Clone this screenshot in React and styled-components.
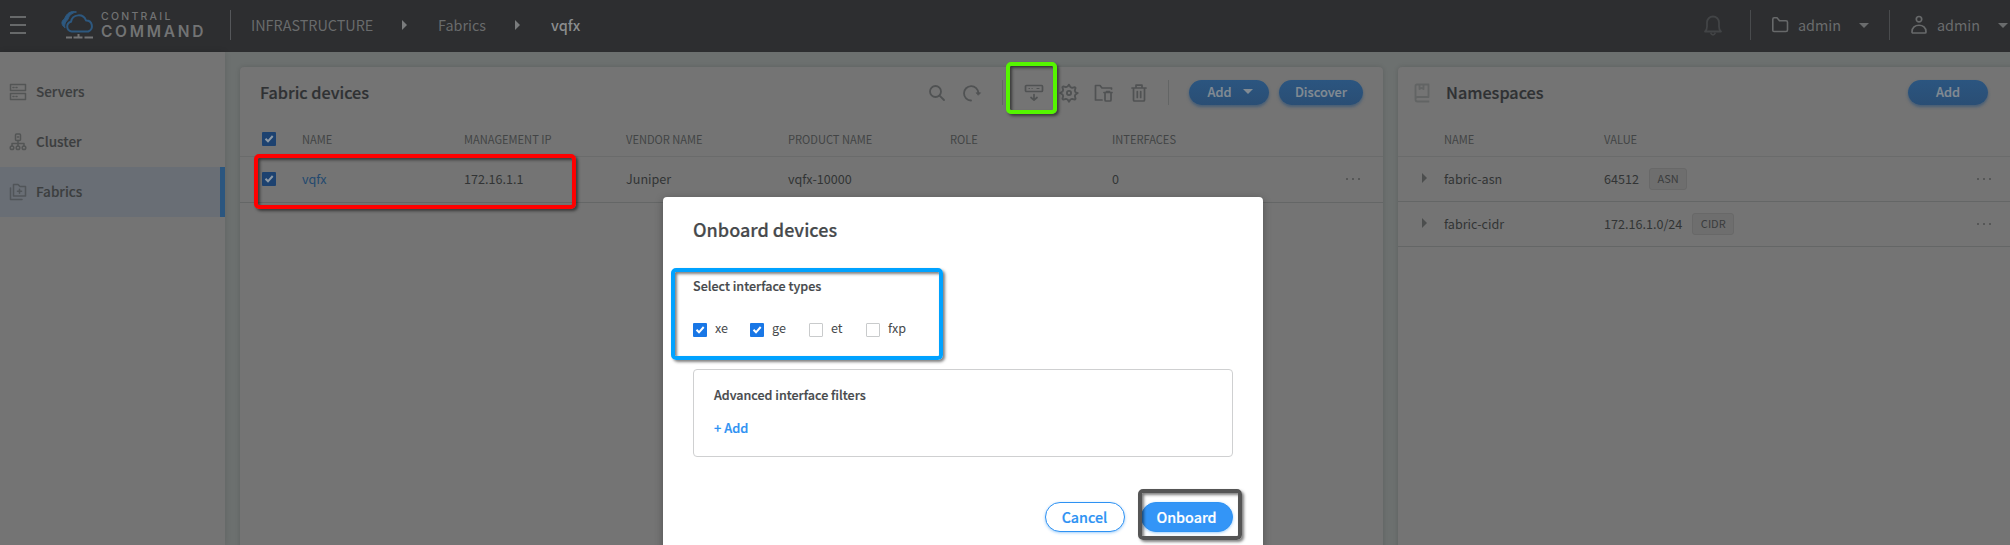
import React from "react";
import styled, { createGlobalStyle, css } from "styled-components";

const Global = createGlobalStyle`
  * { box-sizing: border-box; }
  svg { flex: none; }
  body {
    margin: 0;
    overflow: hidden;
    font-family: "Noto Sans CJK JP", "Noto Sans", sans-serif;
    font-size: 13.5px;
    line-height: 20px;
    color: #2f3133;
  }
`;

const Page = styled.div`
  position: relative;
  display: flex;
  flex-direction: column;
  width: 2010px;
  height: 545px;
  overflow: hidden;
  background: #6c706f;
`;

/* ---------- top bar ---------- */
const TopBar = styled.header`
  display: flex;
  align-items: center;
  flex: none;
  height: 52px;
  padding-bottom: 2px;
  background: #2d2e30;
  color: #6a6c6d;
  font-size: 14.4px;
`;
const MenuButton = styled.div`
  display: flex;
  flex-direction: column;
  gap: 6px;
  width: 16px;
  margin: 0 35px 0 10px;
  i { height: 2px; background: #67696a; }
`;
const Brand = styled.div`
  display: flex;
  align-items: center;
  width: 170px;
  height: 50px;
`;
const Wordmark = styled.div`
  display: flex;
  flex-direction: column;
  margin-left: 6px;
  font-family: Inter, sans-serif;
  color: #727374;
`;
const WordTop = styled.span`
  font-size: 10.5px;
  line-height: 13px;
  font-weight: 500;
  letter-spacing: 2.25px;
`;
const WordBottom = styled.span`
  font-size: 15.5px;
  line-height: 17px;
  font-weight: 600;
  letter-spacing: 2.7px;
`;
const Rule = styled.div`
  flex: none;
  width: 1px;
  height: ${(p) => p.$h || 30}px;
  margin: ${(p) => p.$m || "0"};
  background: ${(p) => p.$c || "#55575a"};
`;
const Crumb = styled.span`
  width: ${(p) => p.$w}px;
  white-space: nowrap;
  color: ${(p) => (p.$active ? "#8b8d8e" : "#696b6c")};
  font-weight: ${(p) => (p.$active ? 500 : 400)};
`;
const Arrow = styled.i`
  flex: none;
  width: 0;
  height: 0;
  border-left: 5px solid ${(p) => p.$c || "#7a7c7d"};
  border-top: 5px solid transparent;
  border-bottom: 5px solid transparent;
  margin: ${(p) => p.$m || "0"};
`;
const Caret = styled.i`
  flex: none;
  width: 0;
  height: 0;
  border-top: 5px solid currentColor;
  border-left: 5px solid transparent;
  border-right: 5px solid transparent;
  margin: ${(p) => p.$m || "0"};
`;
const Account = styled.div`
  display: flex;
  align-items: center;
  flex: none;
  width: 138px;
  padding-left: 20px;
  svg { margin-right: 9px; }
  span { width: 61px; }
`;
const Tools = styled.div`
  display: flex;
  align-items: center;
  flex: none;
  width: 307px;
  margin-left: auto;
`;

/* ---------- body ---------- */
const Body = styled.div`
  display: flex;
  flex: 1;
  min-height: 0;
`;
const Sidebar = styled.nav`
  flex: none;
  width: 225px;
  padding-top: 15px;
  background: #747474;
  box-shadow: 0 0 6px rgba(0, 0, 0, 0.12);
`;
const NavItem = styled.div`
  display: flex;
  align-items: center;
  gap: 9px;
  height: 50px;
  padding-left: 9px;
  font-weight: 500;
  color: #3c3e3f;
  -webkit-text-stroke: 0.15px;
  span { margin-top: -2px; }
  ${(p) => p.$active && css`
    background: #696e75;
    border-right: 5px solid #2b567f;
  `}
`;
const Content = styled.main`
  display: flex;
  flex: none;
  gap: 15px;
  padding: 15px 0 0 15px;
`;
const Panel = styled.section`
  flex: none;
  width: ${(p) => p.$w}px;
  height: 500px;
  border-radius: 4px;
  background: #747474;
  box-shadow: 0 0 5px rgba(0, 0, 0, 0.14);
`;
const PanelHead = styled.div`
  display: flex;
  align-items: center;
  height: 55px;
  padding: 0 20px 4px ${(p) => p.$pl}px;
`;
const PanelTitle = styled.h2`
  margin: -1px auto 0 0;
  font-size: 16.2px;
  font-weight: 500;
  color: #2f3133;
  -webkit-text-stroke: 0.2px;
`;
const ToolIcon = styled.span`
  display: flex;
  width: ${(p) => p.$w || 35}px;
`;
const ButtonGroup = styled.div`
  display: flex;
  gap: 10px;
`;
const Button = styled.button`
  display: flex;
  align-items: center;
  justify-content: center;
  flex: none;
  width: ${(p) => p.$w}px;
  height: 25px;
  padding: 0 0 2px;
  border: 0;
  border-radius: 13px;
  background: linear-gradient(#2b5580, #2a4e74);
  box-shadow: 0 2px 3px rgba(38, 78, 120, 0.6);
  color: #828b93;
  font: 500 12.8px "Noto Sans CJK JP", sans-serif;
  -webkit-text-stroke: 0.2px;
`;
const Row = styled.div`
  display: grid;
  grid-template-columns: ${(p) => p.$cols};
  align-items: center;
  height: ${(p) => p.$h}px;
  padding-left: ${(p) => p.$pl}px;
  padding-bottom: ${(p) => (p.$head ? 0 : 1)}px;
  border-bottom: 1px solid ${(p) => (p.$head ? "#6a6b6b" : "#646666")};
  font-size: ${(p) => (p.$head ? 11.1 : 12.6)}px;
  color: ${(p) => (p.$head ? "#424445" : "#323435")};
`;
const Link = styled.span`
  color: #23496f;
`;
const ValueCell = styled.span`
  display: flex;
  align-items: center;
  gap: 10px;
`;
const Tag = styled.span`
  display: flex;
  align-items: center;
  height: 22px;
  padding: 0 7.5px 1px;
  border: 1px solid #686868;
  border-radius: 3px;
  background: #6e6e6e;
  font-size: 11px;
  color: #3a3c3d;
`;
const More = styled.span`
  display: flex;
  gap: 4px;
  i { width: 2px; height: 2px; border-radius: 1px; background: #4c4e4e; }
`;
const Box = styled.span`
  display: flex;
  align-items: center;
  justify-content: center;
  flex: none;
  width: 14px;
  height: 14px;
  border-radius: 1px;
  background: ${(p) => (p.$on ? (p.$dim ? "#1d4270" : "#1977e6") : "#fff")};
  border: ${(p) => (p.$on ? "0" : "1px solid #c9cbcc")};
`;

/* ---------- modal ---------- */
const Modal = styled.div`
  position: absolute;
  left: 663px;
  top: 197px;
  width: 600px;
  height: 380px;
  padding: 21px 30px 0;
  border-radius: 4px 4px 0 0;
  background: #fff;
  box-shadow: 0 2px 8px rgba(0, 0, 0, 0.3);
  color: #46494c;
`;
const ModalTitle = styled.h1`
  margin: 0;
  font-size: 18px;
  line-height: 22px;
  font-weight: 500;
  -webkit-text-stroke: 0.2px;
`;
const Label = styled.div`
  font-size: 12.55px;
  line-height: 20px;
  font-weight: 500;
  -webkit-text-stroke: 0.2px;
  margin-top: ${(p) => p.$mt || 0}px;
`;
const Options = styled.div`
  display: flex;
  margin-top: 24px;
  height: 20px;
`;
const Option = styled.label`
  display: flex;
  width: ${(p) => p.$w}px;
  gap: 8px;
  align-items: center;
  span:last-child { margin-top: -4px; font-size: 12.6px; }
`;
const Filters = styled.div`
  height: 88px;
  margin-top: 29px;
  padding: 15px 20px;
  border: 1px solid #cfd0d1;
  border-radius: 4px;
`;
const AddLink = styled.div`
  margin: 13px 0 0;
  font-size: 12.8px;
  font-weight: 500;
  color: #2e92f3;
  -webkit-text-stroke: 0.2px;
`;
const Actions = styled.div`
  display: flex;
  justify-content: flex-end;
  gap: 16px;
  margin-top: 45px;
`;
const Action = styled.button`
  width: ${(p) => p.$w}px;
  height: 30px;
  padding: 0 1px 1px 0;
  border-radius: 15px;
  border: 1px solid #2e92f3;
  background: ${(p) => (p.$primary ? "#3395f7" : "#fff")};
  color: ${(p) => (p.$primary ? "#fff" : "#2e92f3")};
  box-shadow: 0 1px 3px rgba(46, 146, 243, 0.45);
  font: 500 14.3px "Noto Sans CJK JP", sans-serif;
  -webkit-text-stroke: 0.2px;
`;

/* Highlight frame laid over the interface */
const Callout = styled.div`
  position: absolute;
  left: ${(p) => p.$x}px;
  top: ${(p) => p.$y}px;
  width: ${(p) => p.$w}px;
  height: ${(p) => p.$h}px;
  border: 4px solid ${(p) => p.$c};
  border-radius: 5px;
  box-shadow: 2px 2px 3px rgba(0, 0, 0, 0.5), inset 2px 2px 3px rgba(0, 0, 0, 0.5);
`;

const Svg = ({ w = 18, h = 18, vb, c = "#505253", sw = 1.7, children }) => (
  <svg width={w} height={h} viewBox={vb || `0 0 ${w} ${h}`} fill="none" stroke={c} strokeWidth={sw} strokeLinejoin="round" strokeLinecap="round">
    {children}
  </svg>
);

const Check = ({ on, dim }) => (
  <Box $on={on} $dim={dim}>
    {on && (
      <Svg w={10} h={10} c={dim ? "#8d99a5" : "#fff"} sw={2}>
        <path d="M1.5 4.8 4 7.3 8.7 2" strokeLinecap="butt" strokeLinejoin="miter" />
      </Svg>
    )}
  </Box>
);

const Dots = () => <More><i /><i /><i /></More>;

const deviceCols = "40px repeat(5, 162px) 234px 20px";
const nsCols = "24px 160px 373px 40px";

export default function App() {
  return (
    <>
      <Global />
      <Page>
        <TopBar>
          <MenuButton><i /><i /><i /></MenuButton>
          <Brand>
            <Svg w={34} h={30} c="#2d587f" sw={2}>
              <path d="M11 21.500H10.500a5 5 0 0 1-.5-9.800 7.800 7.800 0 0 1 15-1.200 5.700 5.700 0 0 1 2.300 11Z" />
              <path d="M3.800 17.500C0 15.500 0 10.500 3.500 9 5.500 3 10 .5 15.500 2 10.500 3 8 5.500 7 9.500 4.500 11.500 3.200 14 3.800 17.500Z" fill="#2d587f" strokeWidth="1" />
              <path d="M5 27.500H11M12.500 27.500H21.500M23.500 27.500H32M17.500 24V28" stroke="#727374" strokeLinecap="butt" />
            </Svg>
            <Wordmark>
              <WordTop>CONTRAIL</WordTop>
              <WordBottom>COMMAND</WordBottom>
            </Wordmark>
          </Brand>
          <Rule $m="0 20px 0 -1px" />
          <Crumb $w={151}>INFRASTRUCTURE</Crumb>
          <Arrow $m="0 31px 0 0" />
          <Crumb $w={77}>Fabrics</Crumb>
          <Arrow $m="0 31px 0 0" />
          <Crumb $w={60} $active>vqfx</Crumb>
          <Tools>
            <Svg w={20} h={22} c="#424446" sw={1.8}>
              <path d="M2 17.500c1.500-1 2-2.500 2-5V8.500a6 6 0 0 1 12 0v4c0 2.500.5 4 2 5ZM8 19.500a2.200 2.200 0 0 0 4 0" />
            </Svg>
            <Rule $m="0 0 0 27px" $c="#494b4d" />
            <Account>
              <Svg w={18} h={18} c="#67696a" sw={1.6}>
                <path d="M1.800 14.500V3.200Q1.800 1.800 3.200 1.800H6L8.500 4.800H15Q16.500 4.800 16.500 6.200V14Q16.500 15.500 15 15.500H3Q1.800 15.500 1.800 14.500Z" />
              </Svg>
              <span>admin</span>
              <Caret />
            </Account>
            <Rule $c="#494b4d" />
            <Account>
              <Svg w={18} h={20} c="#67696a" sw={1.7}>
                <circle cx="9" cy="4.200" r="2.700" />
                <path d="M2 17C1.500 8 16.500 8 16 17Q16 18 15 18H3Q2 18 2 17Z" />
              </Svg>
              <span>admin</span>
              <Caret />
            </Account>
          </Tools>
        </TopBar>

        <Body>
          <Sidebar>
            <NavItem>
              <Svg c="#535555" sw={1.5}>
                <path d="M1.500 1.500h15v6h-15ZM1.500 10.500h15v6h-15Z" />
                <path d="M4 4.500h1M7 4.500h1M4 13.500h1M7 13.500h1" />
              </Svg>
              <span>Servers</span>
            </NavItem>
            <NavItem>
              <Svg c="#535555" sw={1.5}>
                <rect x="6.500" y="1" width="5" height="6.500" rx="1" />
                <path d="M9 7.500V13M3 13V10.500H15V13M8.500 4h1" />
                <circle cx="3" cy="14.800" r="1.800" /><circle cx="9" cy="14.800" r="1.800" /><circle cx="15" cy="14.800" r="1.800" />
              </Svg>
              <span>Cluster</span>
            </NavItem>
            <NavItem $active>
              <Svg c="#515559" sw={1.5}>
                <path d="M4.500 1.500H9L11 3.500H16.500V13H4.500ZM1.500 5V16.500H13M8.500 8.300h4M10.500 6.300v4" />
              </Svg>
              <span>Fabrics</span>
            </NavItem>
          </Sidebar>

          <Content>
            <Panel $w={1143}>
              <PanelHead $pl={20}>
                <PanelTitle>Fabric devices</PanelTitle>
                <ToolIcon $w={34}>
                  <Svg sw={1.8}><circle cx="7.500" cy="7.500" r="5.500" /><path d="M11.800 11.800 16 16" /></Svg>
                </ToolIcon>
                <ToolIcon $w={40}>
                  <Svg w={20} sw={1.8}><path d="M9 16.500A7.200 7.200 0 1 1 16.400 9" /><path d="M14.500 8.800h4L16.500 11Z" fill="#505253" strokeWidth=".8" /></Svg>
                </ToolIcon>
                <Rule $h={25} $c="#636565" $m="0 21px 0 0" />
                <ToolIcon>
                  <Svg w={20}><rect x="1.500" y="1.500" width="17" height="6" rx="1" /><path d="M5 4.500h.5M8 4.500h.2M13 4.500h2" strokeWidth="1.100" /><path d="M10 10.500V16M7 13.500 10 16.200 13 13.500" /></Svg>
                </ToolIcon>
                <ToolIcon>
                  <Svg w={20} h={20} vb="0 0 24 24" sw={2.2}>
                    <path d="M12 2l1.700 3 2 .8L19 4.900l.9.9-.9 3.300.8 2L22.500 12l-2.700 1.700-.8 2 .9 3.300-.9.9-3.300-.9-2 .8L12 22.500l-1.700-2.700-2-.8-3.300.9-.9-.9.9-3.300-.8-2L1.500 12l2.700-1.700.8-2L4.100 5l.9-.9 3.300.9 2-.8Z" />
                    <circle cx="12" cy="12" r="2.500" />
                  </Svg>
                </ToolIcon>
                <ToolIcon $w={37}>
                  <Svg w={20}><path d="M8 16H1.500V1.500H6L8 4H17.500V5M10 8.500h8M11 9V16Q11 17 12 17h4Q17 17 17 16V9M12.500 8.500V7.500h3v1" /></Svg>
                </ToolIcon>
                <ToolIcon $w={37}>
                  <Svg w={16}><path d="M1 4H15M2.500 4V16Q2.500 17 3.500 17h9Q13.500 17 13.500 16V4M5 4V1.200h6V4M6.300 7.500v6M9.700 7.500v6" /></Svg>
                </ToolIcon>
                <Rule $h={25} $c="#636565" $m="0 20px 0 0" />
                <ButtonGroup>
                  <Button $w={80}>Add<Caret $m="0 -2px 0 11px" /></Button>
                  <Button $w={84}>Discover</Button>
                </ButtonGroup>
              </PanelHead>
              <Row $head $cols={deviceCols} $h={35} $pl={22}>
                <Check on dim /><span>NAME</span><span>MANAGEMENT IP</span><span>VENDOR NAME</span><span>PRODUCT NAME</span><span>ROLE</span><span>INTERFACES</span>
              </Row>
              <Row $cols={deviceCols} $h={46} $pl={22}>
                <Check on dim /><Link>vqfx</Link><span>172.16.1.1</span><span>Juniper</span><span>vqfx-10000</span><span /><span>0</span><Dots />
              </Row>
            </Panel>

            <Panel $w={620}>
              <PanelHead $pl={16}>
                <ToolIcon $w={32}>
                  <Svg w={16} h={20} c="#626464" sw={1.8}>
                    <path d="M14.500 13.500V1.500H3Q1.500 1.500 1.500 3V16.500Q1.500 18.500 3.500 18.500H14.500M1.500 15.500Q2 14 3.500 14H14.500M5.500 2V6L7.500 5 9.500 6V2" />
                  </Svg>
                </ToolIcon>
                <PanelTitle>Namespaces</PanelTitle>
                <ButtonGroup>
                  <Button $w={80}>Add</Button>
                  <span />
                </ButtonGroup>
              </PanelHead>
              <Row $head $cols={nsCols} $h={35} $pl={22}>
                <span /><span>NAME</span><span>VALUE</span>
              </Row>
              <Row $cols={nsCols} $h={45} $pl={22}>
                <Arrow $c="#4c4e4e" $m="-2px 0 0 2px" /><span>fabric-asn</span><ValueCell>64512<Tag>ASN</Tag></ValueCell><Dots />
              </Row>
              <Row $cols={nsCols} $h={45} $pl={22}>
                <Arrow $c="#4c4e4e" $m="-2px 0 0 2px" /><span>fabric-cidr</span><ValueCell>172.16.1.0/24<Tag>CIDR</Tag></ValueCell><Dots />
              </Row>
            </Panel>
          </Content>
        </Body>

        <Modal>
          <ModalTitle>Onboard devices</ModalTitle>
          <Label $mt={36}>Select interface types</Label>
          <Options>
            <Option $w={57}><Check on /><span>xe</span></Option>
            <Option $w={59}><Check on /><span>ge</span></Option>
            <Option $w={57}><Check /><span>et</span></Option>
            <Option $w={57}><Check /><span>fxp</span></Option>
          </Options>
          <Filters>
            <Label>Advanced interface filters</Label>
            <AddLink>+ Add</AddLink>
          </Filters>
          <Actions>
            <Action $w={80}>Cancel</Action>
            <Action $w={92} $primary>Onboard</Action>
          </Actions>
        </Modal>

        <Callout $x={254} $y={154} $w={322} $h={55} $c="#ff0000" />
        <Callout $x={1006} $y={62} $w={51} $h={52} $c="#55f500" />
        <Callout $x={671} $y={268} $w={272} $h={92} $c="#00a2ff" />
        <Callout $x={1138} $y={489} $w={104} $h={51} $c="#555" />
      </Page>
    </>
  );
}
